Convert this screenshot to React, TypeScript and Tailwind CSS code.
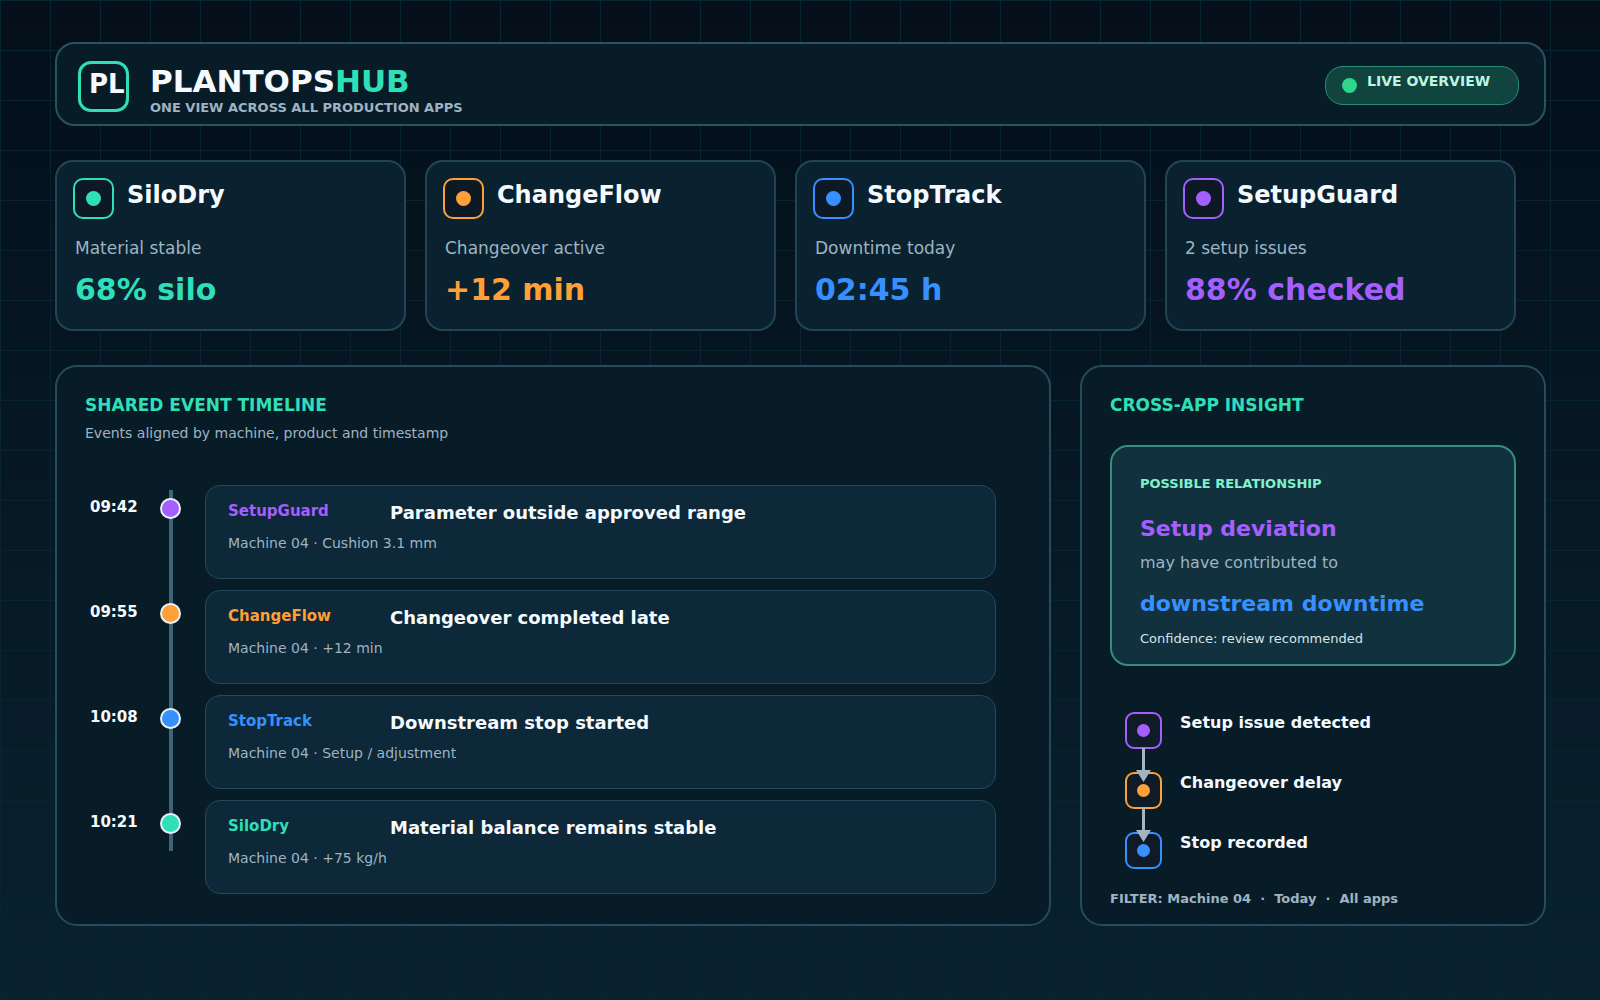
import React from 'react';
import clsx from 'clsx';

type AppKey = 'silo' | 'change' | 'stop' | 'setup';

const textColor: Record<AppKey, string> = {
    silo: 'text-[#2fdfb7]',
    change: 'text-[#ff9f38]',
    stop: 'text-[#3690ff]',
    setup: 'text-[#a55eff]',
};

const apps: { key: AppKey; name: string; label: string; value: string }[] = [
    { key: 'silo', name: 'SiloDry', label: 'Material stable', value: '68% silo' },
    { key: 'change', name: 'ChangeFlow', label: 'Changeover active', value: '+12 min' },
    { key: 'stop', name: 'StopTrack', label: 'Downtime today', value: '02:45 h' },
    { key: 'setup', name: 'SetupGuard', label: '2 setup issues', value: '88% checked' },
];

const events: { time: string; key: AppKey; app: string; title: string; detail: string }[] = [
    { time: '09:42', key: 'setup', app: 'SetupGuard', title: 'Parameter outside approved range', detail: 'Machine 04 · Cushion 3.1 mm' },
    { time: '09:55', key: 'change', app: 'ChangeFlow', title: 'Changeover completed late', detail: 'Machine 04 · +12 min' },
    { time: '10:08', key: 'stop', app: 'StopTrack', title: 'Downstream stop started', detail: 'Machine 04 · Setup / adjustment' },
    { time: '10:21', key: 'silo', app: 'SiloDry', title: 'Material balance remains stable', detail: 'Machine 04 · +75 kg/h' },
];

const steps: { key: AppKey; label: string }[] = [
    { key: 'setup', label: 'Setup issue detected' },
    { key: 'change', label: 'Changeover delay' },
    { key: 'stop', label: 'Stop recorded' },
];

const Header: React.FC = () => (
    <header className="flex h-[84px] w-[1491px] rounded-[20px] border-2 border-[#285460] bg-[#081c28] pl-[21px] pr-[25px]">
        <div className="mt-[17px] flex h-[51px] w-[51px] shrink-0 rounded-[13px] border-3 border-[#2fdfb7] pl-[8px] pt-[5px] text-[26px] leading-[30px] font-bold text-[#f5fafe]">
            PL
        </div>
        <div className="ml-[21px] pt-[19px] whitespace-nowrap">
            <h1 className="text-[31px] leading-[36px] font-bold text-[#f5fafe]">
                PLANTOPS<span className="text-[#2fdfb7]">HUB</span>
            </h1>
            <p className="mt-px text-[13px] leading-[15px] font-bold text-[#9fb3c2]">ONE VIEW ACROSS ALL PRODUCTION APPS</p>
        </div>
        <div className="mt-[22px] ml-auto flex h-[39px] w-[194px] rounded-[18px] border border-[#2a8b77] bg-[#11433f] pl-[16px]">
            <span className="mt-[11px] h-[15px] w-[15px] rounded-full bg-[#2fd48d]" />
            <span className="mt-[6px] ml-[10px] text-[14px] leading-[16px] font-bold text-[#bef5e0]">LIVE OVERVIEW</span>
        </div>
    </header>
);

const AppCard: React.FC<{ app: (typeof apps)[number] }> = ({ app }) => (
    <div className="h-[171px] w-[351px] rounded-[18px] border-2 border-[#224553] bg-[#0a222f] px-[16px] pt-[16px]">
        <div className="flex">
            <div className={clsx('flex h-[41px] w-[41px] items-center justify-center rounded-[10px] border-2 border-current bg-[#0d1a25]', textColor[app.key])}>
                <span className="h-[15px] w-[15px] rounded-full bg-current" />
            </div>
            <h2 className="mt-[3px] ml-[13px] text-[24px] leading-[28px] font-bold text-[#f5fafe]">{app.name}</h2>
        </div>
        <p className="mt-[19px] ml-[2px] text-[17px] leading-[20px] text-[#9fb3c2]">{app.label}</p>
        <p className={clsx('mt-[14px] ml-[2px] text-[30px] leading-[35px] font-bold', textColor[app.key])}>{app.value}</p>
    </div>
);

const Timeline: React.FC = () => (
    <section className="h-[561px] w-[996px] rounded-[22px] border-2 border-[#244c5b] bg-[#081c28] pt-[28px] pl-[28px]">
        <h3 className="text-[17px] leading-[20px] font-bold text-[#2fdfb7]">SHARED EVENT TIMELINE</h3>
        <p className="mt-[10px] text-[14px] leading-[16px] text-[#9fb3c2]">Events aligned by machine, product and timestamp</p>
        <div className="relative mt-[44px] flex flex-col gap-[11px]">
            <div className="absolute top-[5px] left-[84px] h-[361px] w-[4px] bg-[#3c6677]" />
            {events.map((event) => (
                <div key={event.time} className="relative flex h-[94px]">
                    <span className="mt-[13px] ml-[5px] w-[70px] text-[15px] leading-[18px] font-bold text-[#f5fafe]">{event.time}</span>
                    <span className={clsx('mt-[13px] h-[21px] w-[21px] rounded-full border-2 border-[#e6f2f8] bg-current', textColor[event.key])} />
                    <div className="ml-[24px] w-[791px] rounded-[15px] border border-[#24495a] bg-[#0c2839] pt-[16px] pl-[22px]">
                        <div className="flex">
                            <span className={clsx('w-[162px] text-[15px] leading-[18px] font-bold', textColor[event.key])}>{event.app}</span>
                            <span className="text-[18px] leading-[21px] font-bold text-[#f5fafe]">{event.title}</span>
                        </div>
                        <p className="mt-[12px] text-[14px] leading-[16px] text-[#9fb3c2]">{event.detail}</p>
                    </div>
                </div>
            ))}
        </div>
    </section>
);

const Arrow: React.FC = () => (
    <svg className="absolute top-[36px] left-[11px] z-10" width="15" height="34" viewBox="0 0 15 34" fill="#a2b5c3">
        <rect x="6" y="0" width="3" height="23" />
        <path d="M0 22H15L7.5 34Z" />
    </svg>
);

const Insight: React.FC = () => (
    <section className="h-[561px] w-[466px] rounded-[22px] border-2 border-[#244c5b] bg-[#081c28] pt-[28px] pl-[28px]">
        <h3 className="text-[17px] leading-[20px] font-bold text-[#2fdfb7]">CROSS-APP INSIGHT</h3>
        <div className="mt-[30px] h-[221px] w-[406px] rounded-[18px] border-2 border-[#358e7e] bg-[#10313d] pt-[29px] pl-[28px]">
            <p className="text-[13px] leading-[15px] font-bold text-[#83f0cd]">POSSIBLE RELATIONSHIP</p>
            <p className="mt-[25px] text-[22px] leading-[25px] font-bold text-[#a55eff]">Setup deviation</p>
            <p className="mt-[12px] text-[16px] leading-[19px] text-[#9fb3c2]">may have contributed to</p>
            <p className="mt-[19px] text-[22px] leading-[25px] font-bold text-[#3690ff]">downstream downtime</p>
            <p className="mt-[15px] text-[13px] leading-[15px] text-[#d5e5ec]">Confidence: review recommended</p>
        </div>
        <div className="mt-[46px] ml-[15px] flex flex-col gap-[23px]">
            {steps.map((step, i) => (
                <div key={step.key} className="relative flex h-[37px]">
                    <div className={clsx('flex h-[37px] w-[37px] items-center justify-center rounded-[9px] border-2 border-current bg-[#0f1c28]', textColor[step.key])}>
                        <span className="h-[13px] w-[13px] rounded-full bg-current" />
                    </div>
                    <span className="mt-px ml-[18px] text-[16px] leading-[19px] font-bold text-[#f5fafe]">{step.label}</span>
                    {i < steps.length - 1 && <Arrow />}
                </div>
            ))}
        </div>
        <p className="mt-[22px] text-[13px] leading-[15px] font-bold whitespace-pre text-[#9fb3c2]">
            {'FILTER: Machine 04  ·  Today  ·  All apps'}
        </p>
    </section>
);

export default function App() {
    return (
        <div className="h-[1000px] w-[1600px] overflow-hidden bg-linear-to-b from-[#040f1a] to-[#09222e] font-['DejaVu_Sans',sans-serif]">
            <div className="h-full bg-[linear-gradient(to_right,#092431_1px,transparent_1px),linear-gradient(to_bottom,#092431_1px,transparent_1px)] bg-[size:50px_50px] pt-[42px] pl-[55px]">
                <Header />
                <div className="mt-[34px] flex gap-[19px]">
                    {apps.map((app) => (
                        <AppCard key={app.key} app={app} />
                    ))}
                </div>
                <div className="mt-[34px] flex gap-[29px]">
                    <Timeline />
                    <Insight />
                </div>
            </div>
        </div>
    );
}
